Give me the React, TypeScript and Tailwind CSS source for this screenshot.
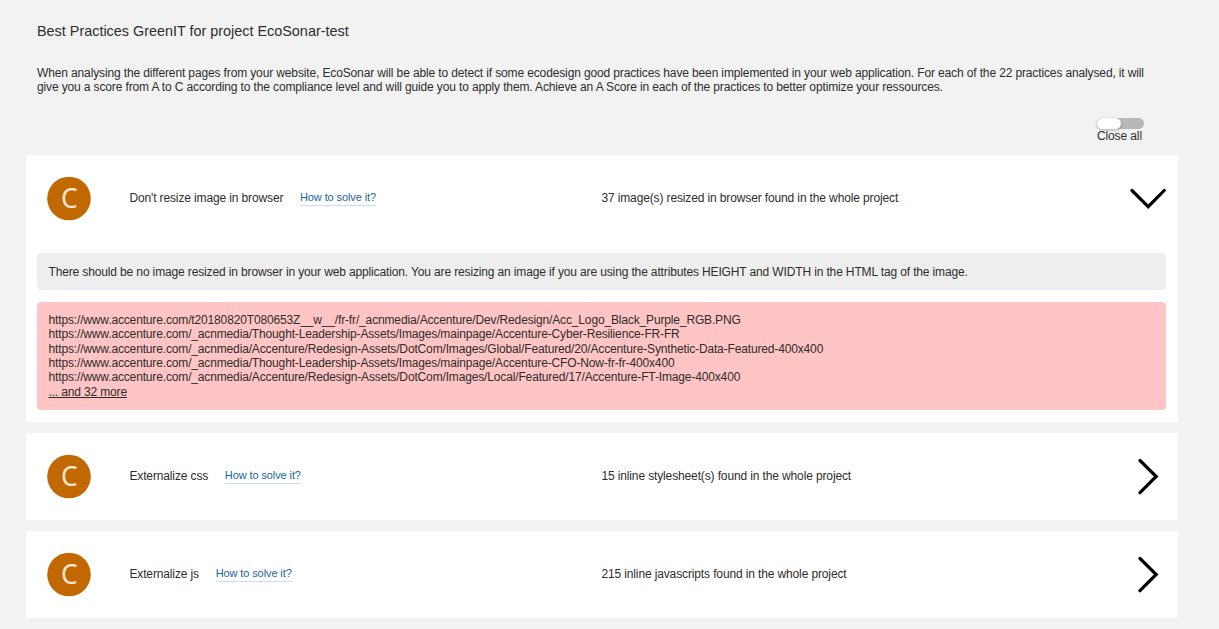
import React from "react";

function Badge() {
  return (
    <svg width="44" height="45" viewBox="0 0 44 45" className="ml-[21px] block shrink-0">
      <circle cx="22" cy="22.5" r="21.8" fill="#c16800" />
      <text x="22.3" y="32" textAnchor="middle" fontSize="26.5" fill="#f8e6d2" fontFamily="'Noto Sans', 'Open Sans', sans-serif">C</text>
    </svg>
  );
}

function Arrow({ open }: { open: boolean }) {
  return open ? (
    <svg width="36" height="23" viewBox="0 0 36 23" className="mr-[12px] ml-auto block" fill="none" stroke="#000" strokeWidth="3.2" strokeLinecap="round">
      <path d="M2 3.5 18.2 19.7 34.2 3.5" />
    </svg>
  ) : (
    <svg width="22" height="37" viewBox="0 0 22 37" className="mr-[18px] ml-auto block" fill="none" stroke="#000" strokeWidth="3.2" strokeLinecap="round">
      <path d="M2 2.5 18.2 18.5 2 34.7" />
    </svg>
  );
}

function Header({ title, result, open = false }: { title: string; result: string; open?: boolean }) {
  return (
    <div className="flex h-[87px] items-center">
      <Badge />
      <div className="ml-[38.4px] flex w-[472px] items-center">
        <span className="tracking-[-0.13px]">{title}</span>
        <a className="mb-[2px] ml-[16.7px] border-b border-[#c5dfec] text-[11px] leading-[16px] tracking-[-0.1px] text-[#1b659c]">How to solve it?</a>
      </div>
      <span className="tracking-[-0.13px]">{result}</span>
      <Arrow open={open} />
    </div>
  );
}

const urls = [
  "https://www.accenture.com/t20180820T080653Z__w__/fr-fr/_acnmedia/Accenture/Dev/Redesign/Acc_Logo_Black_Purple_RGB.PNG",
  "https://www.accenture.com/_acnmedia/Thought-Leadership-Assets/Images/mainpage/Accenture-Cyber-Resilience-FR-FR",
  "https://www.accenture.com/_acnmedia/Accenture/Redesign-Assets/DotCom/Images/Global/Featured/20/Accenture-Synthetic-Data-Featured-400x400",
  "https://www.accenture.com/_acnmedia/Thought-Leadership-Assets/Images/mainpage/Accenture-CFO-Now-fr-fr-400x400",
  "https://www.accenture.com/_acnmedia/Accenture/Redesign-Assets/DotCom/Images/Local/Featured/17/Accenture-FT-Image-400x400",
];

export default function App() {
  return (
    <main className="h-[629px] overflow-hidden bg-[#f2f2f2] pr-[41px] pl-[26px] font-['Liberation_Sans',Arial,sans-serif] text-[12px] leading-[14.4px] text-[#2d2d2d]">
      <h1 className="pt-[23px] pl-[11px] text-[14.4px] leading-[16px]">Best Practices GreenIT for project EcoSonar-test</h1>
      <p className="mt-[27px] pl-[11px] whitespace-nowrap tracking-[-0.133px]">
        When analysing the different pages from your website, EcoSonar will be able to detect if some ecodesign good practices have been implemented in your web application. For each of the 22 practices analysed, it will
        <br />
        give you a score from A to C according to the compliance level and will guide you to apply them. Achieve an A Score in each of the practices to better optimize your ressources.
      </p>
      <div className="mt-[23px] mr-[34px] flex h-[37px] flex-col items-end">
        <div className="h-[11px] w-[47px] rounded-full bg-[#b8b8b8]">
          <div className="h-[11px] w-[24px] rounded-full bg-white shadow-[0_1px_3px_rgba(0,0,0,0.3)]" />
        </div>
        <span className="mr-[2px] tracking-[-0.1px]">Close all</span>
      </div>
      <section className="h-[267px] bg-white">
        <Header title="Don't resize image in browser" result="37 image(s) resized in browser found in the whole project" open />
        <div className="mr-[12px] ml-[11px] mt-[11px] flex h-[37px] items-center rounded-[4px] bg-[#eeeeee] pt-px pl-[11.5px] tracking-[-0.138px]">
          There should be no image resized in browser in your web application. You are resizing an image if you are using the attributes HEIGHT and WIDTH in the HTML tag of the image.
        </div>
        <div className="mr-[12px] ml-[11px] mt-[12px] h-[108px] rounded-[4px] bg-[#ffc4c4] pt-[11px] pl-[11.5px] tracking-[-0.15px]">
          {urls.map((url) => (
            <div key={url}>{url}</div>
          ))}
          <span className="underline">... and 32 more</span>
        </div>
      </section>
      <section className="mt-[11px] bg-white">
        <Header title="Externalize css" result="15 inline stylesheet(s) found in the whole project" />
      </section>
      <section className="mt-[11px] bg-white">
        <Header title="Externalize js" result="215 inline javascripts found in the whole project" />
      </section>
    </main>
  );
}
